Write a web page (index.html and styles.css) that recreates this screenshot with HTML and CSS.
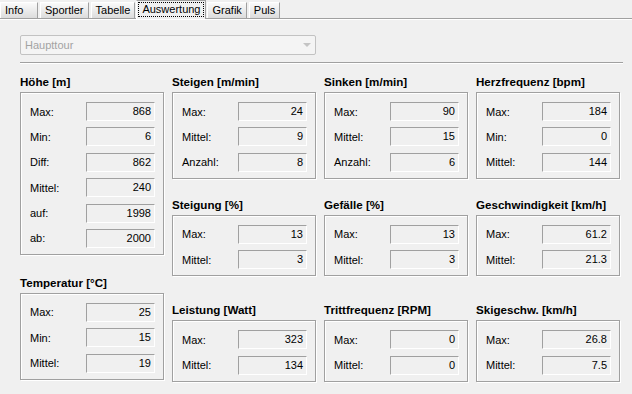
FILE: index.html
```html
<!DOCTYPE html>
<html lang="de">
<head>
    <meta charset="UTF-8">
    <title>Auswertung</title>
    <link rel="stylesheet" href="styles.css">
</head>
<body>
    <nav class="tabs">
        <a class="tab tab-first">Info</a>
        <a class="tab">Sportler</a>
        <a class="tab">Tabelle</a>
        <a class="tab active"><span>Auswertung</span></a>
        <a class="tab">Grafik</a>
        <a class="tab">Puls</a>
    </nav>
    <div class="panel">
        <div class="combo">
            <span>Haupttour</span>
            <span class="arrow"></span>
        </div>
        <div class="separator"></div>
        <div class="groups">
            <div class="column">
                <section class="group">
                    <h3>Höhe [m]</h3>
                    <div class="box">
                        <label>Max:</label><div class="field">868</div>
                        <label>Min:</label><div class="field">6</div>
                        <label>Diff:</label><div class="field">862</div>
                        <label>Mittel:</label><div class="field">240</div>
                        <label>auf:</label><div class="field">1998</div>
                        <label>ab:</label><div class="field">2000</div>
                    </div>
                </section>
                <section class="group group-temp">
                    <h3>Temperatur [°C]</h3>
                    <div class="box">
                        <label>Max:</label><div class="field">25</div>
                        <label>Min:</label><div class="field">15</div>
                        <label>Mittel:</label><div class="field">19</div>
                    </div>
                </section>
            </div>
            <div class="column">
                <section class="group">
                    <h3>Steigen [m/min]</h3>
                    <div class="box">
                        <label>Max:</label><div class="field">24</div>
                        <label>Mittel:</label><div class="field">9</div>
                        <label>Anzahl:</label><div class="field">8</div>
                    </div>
                </section>
                <section class="group group-mid">
                    <h3>Steigung [%]</h3>
                    <div class="box">
                        <label>Max:</label><div class="field">13</div>
                        <label>Mittel:</label><div class="field">3</div>
                    </div>
                </section>
                <section class="group group-low">
                    <h3>Leistung [Watt]</h3>
                    <div class="box">
                        <label>Max:</label><div class="field">323</div>
                        <label>Mittel:</label><div class="field">134</div>
                    </div>
                </section>
            </div>
            <div class="column">
                <section class="group">
                    <h3>Sinken [m/min]</h3>
                    <div class="box">
                        <label>Max:</label><div class="field">90</div>
                        <label>Mittel:</label><div class="field">15</div>
                        <label>Anzahl:</label><div class="field">6</div>
                    </div>
                </section>
                <section class="group group-mid">
                    <h3>Gefälle [%]</h3>
                    <div class="box">
                        <label>Max:</label><div class="field">13</div>
                        <label>Mittel:</label><div class="field">3</div>
                    </div>
                </section>
                <section class="group group-low">
                    <h3>Trittfrequenz [RPM]</h3>
                    <div class="box">
                        <label>Max:</label><div class="field">0</div>
                        <label>Mittel:</label><div class="field">0</div>
                    </div>
                </section>
            </div>
            <div class="column">
                <section class="group">
                    <h3>Herzfrequenz [bpm]</h3>
                    <div class="box">
                        <label>Max:</label><div class="field">184</div>
                        <label>Min:</label><div class="field">0</div>
                        <label>Mittel:</label><div class="field">144</div>
                    </div>
                </section>
                <section class="group group-mid">
                    <h3>Geschwindigkeit [km/h]</h3>
                    <div class="box">
                        <label>Max:</label><div class="field">61.2</div>
                        <label>Mittel:</label><div class="field">21.3</div>
                    </div>
                </section>
                <section class="group group-low">
                    <h3>Skigeschw. [km/h]</h3>
                    <div class="box">
                        <label>Max:</label><div class="field">26.8</div>
                        <label>Mittel:</label><div class="field">7.5</div>
                    </div>
                </section>
            </div>
        </div>
    </div>
</body>
</html>
```

FILE: styles.css
```css
body {
    font-family: "Liberation Sans", Arial, sans-serif;
    font-size: 11px;
    background-color: #f0f0f0;
    color: #000;
    margin: 0;
    width: 632px;
    height: 394px;
    overflow: hidden;
}
.tabs {
    display: flex;
    align-items: flex-end;
    gap: 2px;
    height: 18px;
}
.tab {
    box-sizing: border-box;
    height: 16px;
    padding: 0 4px;
    line-height: 14px;
    border: 1px solid #a0a0a0;
    border-bottom: none;
    border-left-color: #fff;
    border-top-color: #fff;
    background: linear-gradient(#fafafa, #dcdcdc);
}
.tab-first {
    width: 38px;
}
.tab.active {
    position: relative;
    z-index: 1;
    height: 19px;
    margin: 0 -1px -1px;
    padding: 1px 1px 0;
    background: #f0f0f0;
    border-color: #a0a0a0;
    border-left-color: #fff;
}
.tab.active span {
    display: block;
    height: 15px;
    padding: 0 4px;
    outline: 1px dotted #000;
    outline-offset: -1px;
}
.panel {
    border-top: 1px solid #a0a0a0;
    box-shadow: inset 0 1px 0 #fff;
    padding: 16px 9px 0 20px;
    height: 375px;
}
.combo {
    box-sizing: border-box;
    display: flex;
    justify-content: space-between;
    align-items: center;
    width: 296px;
    height: 20px;
    padding: 0 4px 0 4px;
    border: 1px solid #c2c2c2;
    border-radius: 2px;
    background: #f4f4f4;
    color: #a3a3a3;
}
.arrow {
    width: 0;
    height: 0;
    border-left: 4px solid transparent;
    border-right: 4px solid transparent;
    border-top: 4px solid #c4c4c4;
}
.separator {
    width: 603px;
    margin-top: 7px;
    border-top: 1px solid #a0a0a0;
    border-bottom: 1px solid #fff;
}
.groups {
    display: grid;
    grid-template-columns: repeat(4, 144px);
    column-gap: 8px;
    margin-top: 11px;
}
.group h3 {
    margin: 0 0 3px;
    font-size: 11.6px;
    line-height: 14px;
}
.group-temp {
    margin-top: 21px;
}
.group-mid {
    margin-top: 19px;
}
.group-low {
    margin-top: 27px;
}
.box {
    display: grid;
    grid-template-columns: 1fr 69px;
    row-gap: 6.4px;
    align-items: center;
    padding: 9px 8px 6px;
    border: 1px solid #a0a0a0;
    box-shadow: inset 1px 1px 0 #fff, 1px 1px 0 #fff;
}
.box label {
    padding-left: 1px;
}
.field {
    box-sizing: border-box;
    height: 19px;
    line-height: 17px;
    padding-right: 3px;
    text-align: right;
    border-top: 1px solid #a0a0a0;
    border-left: 1px solid #a0a0a0;
    border-right: 1px solid #fff;
    border-bottom: 1px solid #fff;
}
```
